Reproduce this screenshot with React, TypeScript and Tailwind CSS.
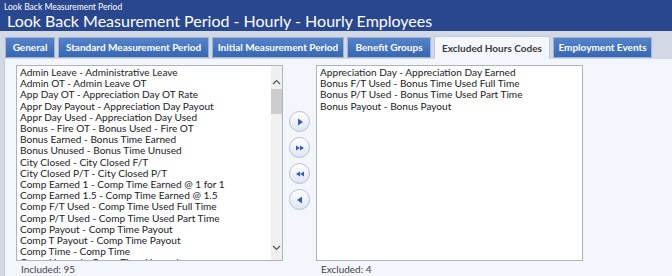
import React from "react";

const included = [
  "Admin Leave - Administrative Leave",
  "Admin OT - Admin Leave OT",
  "App Day OT - Appreciation Day OT Rate",
  "Appr Day Payout - Appreciation Day Payout",
  "Appr Day Used - Appreciation Day Used",
  "Bonus - Fire OT - Bonus Used - Fire OT",
  "Bonus Earned - Bonus Time Earned",
  "Bonus Unused - Bonus Time Unused",
  "City Closed - City Closed F/T",
  "City Closed P/T - City Closed P/T",
  "Comp Earned 1 - Comp Time Earned @ 1 for 1",
  "Comp Earned 1.5 - Comp Time Earned @ 1.5",
  "Comp F/T Used - Comp Time Used Full Time",
  "Comp P/T Used - Comp Time Used Part Time",
  "Comp Payout - Comp Time Payout",
  "Comp T Payout - Comp Time Payout",
  "Comp Time - Comp Time",
  "Comp Unused - Comp Time Unused",
];

const excluded = [
  "Appreciation Day - Appreciation Day Earned",
  "Bonus F/T Used - Bonus Time Used Full Time",
  "Bonus P/T Used - Bonus Time Used Part Time",
  "Bonus Payout - Bonus Payout",
];

const tabs = [
  { label: "General", w: "w-[50px]" },
  { label: "Standard Measurement Period", w: "w-[151px]" },
  { label: "Initial Measurement Period", w: "w-[132px]" },
  { label: "Benefit Groups", w: "w-[84px]" },
  { label: "Excluded Hours Codes", w: "w-[116px]", active: true },
  { label: "Employment Events", w: "w-[99px]" },
];

function RoundButton({ kind }: { kind: "one" | "all" | "allBack" | "back" }) {
  return (
    <button className="w-[21px] h-[21px] rounded-full border border-[#b4c0d2] bg-gradient-to-b from-white to-[#dfe6f0] flex items-center justify-center">
      <svg width="10" height="10" viewBox="0 0 10 10">
        {kind === "one" && <polygon points="3,1.5 8,5 3,8.5" fill="#2f5fae" />}
        {kind === "back" && <polygon points="7,1.5 2,5 7,8.5" fill="#2f5fae" />}
        {kind === "all" && (
          <>
            <polygon points="1,2.5 5,5 1,7.5" fill="#2f5fae" />
            <polygon points="5,2.5 9,5 5,7.5" fill="#2f5fae" />
          </>
        )}
        {kind === "allBack" && (
          <>
            <polygon points="5,2.5 1,5 5,7.5" fill="#2f5fae" />
            <polygon points="9,2.5 5,5 9,7.5" fill="#2f5fae" />
          </>
        )}
      </svg>
    </button>
  );
}

export default function App() {
  return (
    <div
      className="w-[672px] h-[276px] overflow-hidden bg-[#d3d9e4] flex flex-col"
      style={{ fontFamily: 'Lato, "Noto Sans", sans-serif' }}
    >
      {/* Header */}
      <div className="h-[31px] shrink-0 bg-[#29478f] px-[4px] text-white flex flex-col">
        <div className="text-[8.5px] leading-[10px] pt-[2px]">Look Back Measurement Period</div>
        <div className="text-[16px] leading-[18px] pl-[3px]">
          Look Back Measurement Period - Hourly - Hourly Employees
        </div>
      </div>

      {/* Tabs */}
      <div className="h-[28px] shrink-0 flex items-end pl-[5px] gap-[3px]">
        {tabs.map((t) =>
          t.active ? (
            <div
              key={t.label}
              className={`${t.w} h-[23px] bg-[#f4f7fd] border border-b-0 border-[#c4ccd9] text-[#3a3a3a] text-[10px] font-bold whitespace-nowrap flex items-center justify-center`}
            >
              {t.label}
            </div>
          ) : (
            <div
              key={t.label}
              className={`${t.w} h-[21px] mb-[1px] bg-gradient-to-b from-[#5683c9] to-[#3767b3] border border-[#9fb3d3] text-white text-[10px] font-bold whitespace-nowrap flex items-center justify-center`}
            >
              {t.label}
            </div>
          )
        )}
      </div>

      {/* Content */}
      <div className="flex-1 min-h-0 ml-[4px] bg-[#f3f6fc] border-l border-[#c5ccd8] pl-[11px] pt-[6px] flex flex-col">
        <div className="flex items-start">
          {/* Left list */}
          <div className="w-[267px] h-[196px] overflow-hidden bg-white border border-[#aeb4bd] flex">
            <div className="flex-1 overflow-hidden pl-[3px] pt-[1px]">
              {included.map((i) => (
                <div key={i} className="text-[10.1px] leading-[11.2px] text-[#222] whitespace-nowrap">
                  {i}
                </div>
              ))}
            </div>
            <div className="w-[11px] bg-[#f0f0f0] flex flex-col items-center">
              <svg width="9" height="6" viewBox="0 0 9 6" className="mt-[13px]">
                <path d="M1 5 L4.5 1.5 L8 5" stroke="#555" strokeWidth="1.2" fill="none" />
              </svg>
              <div className="w-[11px] h-[25px] bg-[#cdcdcd] mt-[4px]" />
              <div className="flex-1" />
              <svg width="9" height="6" viewBox="0 0 9 6" className="mb-[9px]">
                <path d="M1 1 L4.5 4.5 L8 1" stroke="#555" strokeWidth="1.2" fill="none" />
              </svg>
            </div>
          </div>

          {/* Buttons */}
          <div className="w-[33px] flex flex-col items-center pt-[46px] gap-[5px]">
            <RoundButton kind="one" />
            <RoundButton kind="all" />
            <RoundButton kind="allBack" />
            <RoundButton kind="back" />
          </div>

          {/* Right list */}
          <div className="w-[267px] h-[196px] overflow-hidden bg-white border border-[#aeb4bd] pl-[3px] pt-[1px]">
            {excluded.map((i) => (
              <div key={i} className="text-[10.1px] leading-[11.2px] text-[#222] whitespace-nowrap">
                {i}
              </div>
            ))}
          </div>
        </div>

        <div className="flex text-[10px] leading-[12px] text-[#444] mt-[2px]">
          <div className="w-[300px] pl-[5px]">Included: 95</div>
          <div className="pl-[5px]">Excluded: 4</div>
        </div>
      </div>
    </div>
  );
}
